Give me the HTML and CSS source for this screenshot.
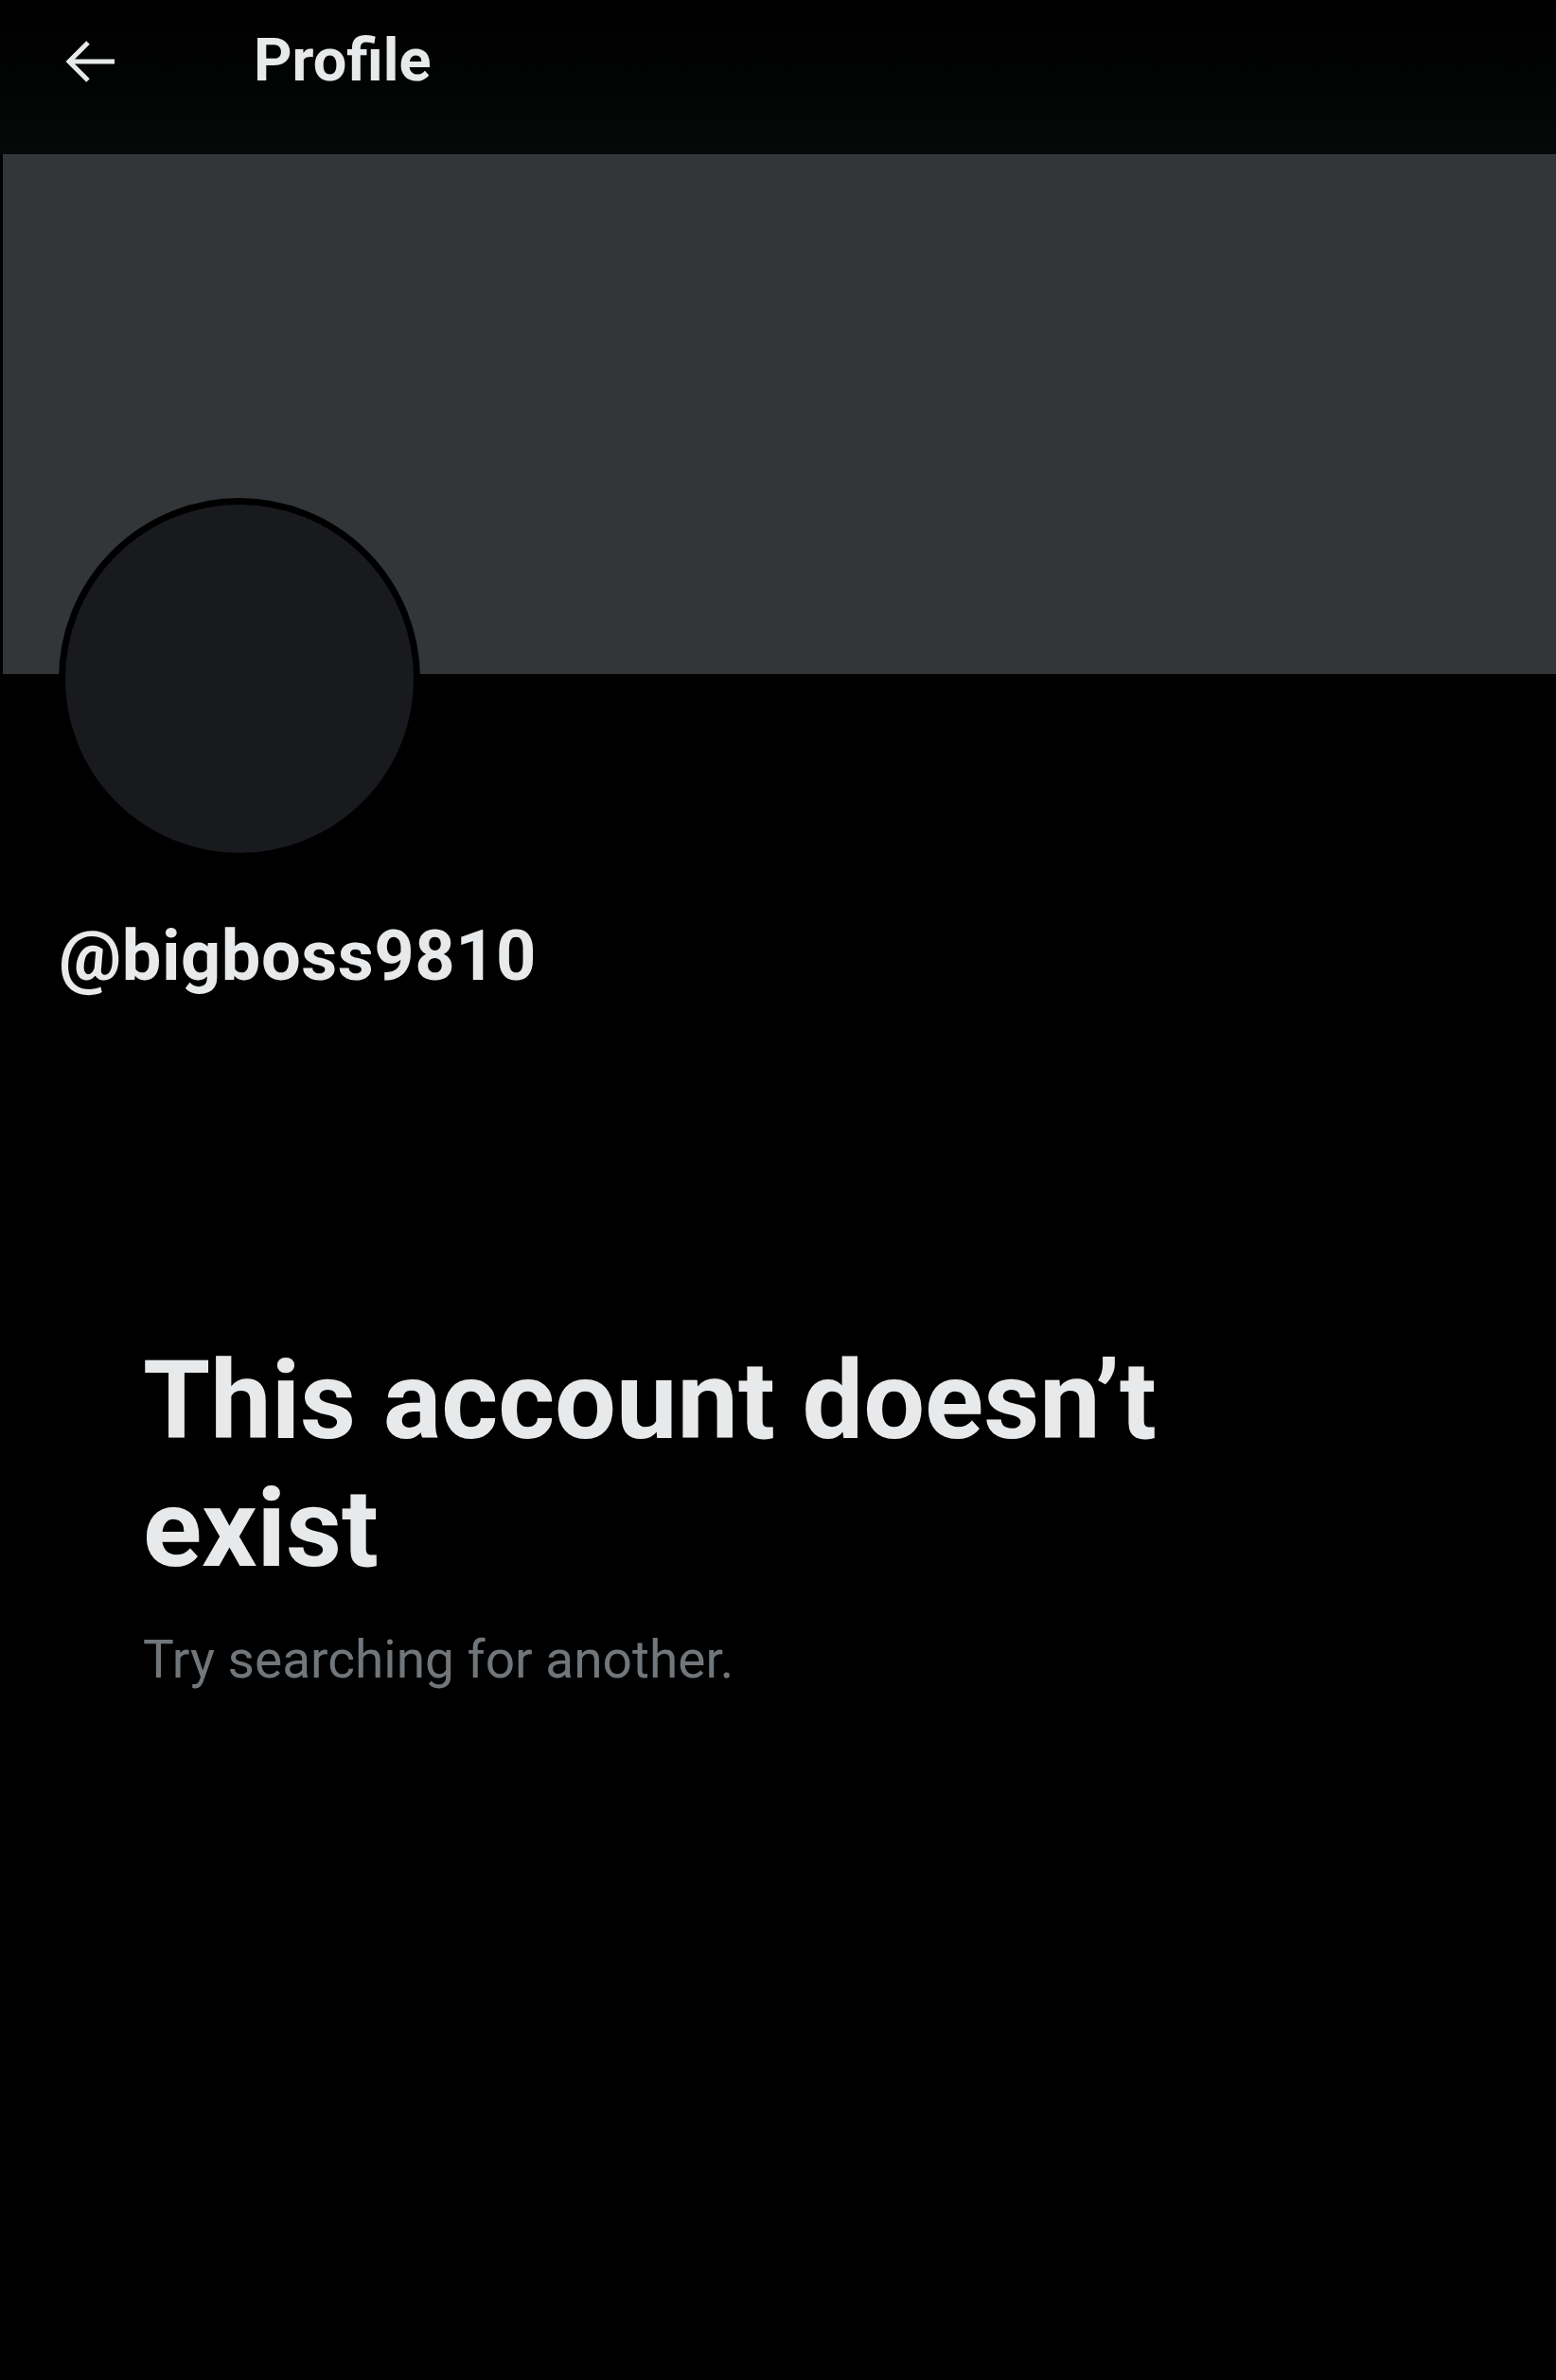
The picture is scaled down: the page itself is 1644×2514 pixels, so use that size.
FILE: index.html
```html
<!DOCTYPE html>
<html>
<head>
<meta charset="utf-8">
<link rel="stylesheet" href="styles.css">
</head>
<body>
<div class="page">
  <header class="topbar">
    <svg class="back" width="56" height="48" viewBox="0 0 56 48">
      <path d="M52 24 H5 M24 4 L4 24 L24 44" fill="none" stroke="#e7e9ea" stroke-width="5" stroke-linecap="butt" stroke-linejoin="miter"/>
    </svg>
    <h1 class="title">Profile</h1>
  </header>
  <div class="banner"></div>
  <div class="avatar"></div>
  <div class="handle">@bigboss9810</div>
  <section class="empty">
    <h2 class="empty-title">This account doesn’t exist</h2>
    <p class="empty-sub">Try searching for another.</p>
  </section>
</div>
</body>
</html>
```

FILE: styles.css
```css
html, body {
  margin: 0;
  padding: 0;
  background: #000;
}
body {
  font-family: Roboto, "Liberation Sans", sans-serif;
  color: #e7e9ea;
}
.page {
  width: 1644px;
  min-height: 2514px;
  background: #000;
}
.topbar {
  height: 163px;
  display: flex;
  align-items: flex-start;
  background: linear-gradient(#000 0%, #020303 50%, #070909 100%);
}
.back {
  margin-left: 69px;
  margin-top: 41px;
  display: block;
}
.title {
  margin: 0;
  margin-left: 143px;
  margin-top: 23px;
  font-size: 63px;
  font-weight: 700;
  line-height: 82px;
  color: #e7e9ea;
}
.banner {
  height: 548px;
  margin-left: 3px;
  background: #323639;
  border-top: 1px solid #3a3e41;
}
.avatar {
  width: 368px;
  height: 368px;
  margin-top: -186px;
  margin-left: 62px;
  border-radius: 50%;
  background: #191a1e;
  border: 7px solid #000;
}
.handle {
  margin-left: 62px;
  margin-top: 62px;
  font-size: 74px;
  font-weight: 700;
  line-height: 80px;
  letter-spacing: 0.5px;
  color: #e7e9ea;
}
.empty {
  padding-left: 151px;
  margin-top: 362px;
  width: 1200px;
}
.empty-title {
  margin: 0;
  font-size: 115px;
  font-weight: 700;
  line-height: 135px;
  color: #e7e9ea;
}
.empty-sub {
  margin: 36px 0 0 0;
  font-size: 55px;
  font-weight: 400;
  line-height: 70px;
  color: #71767b;
}
```
